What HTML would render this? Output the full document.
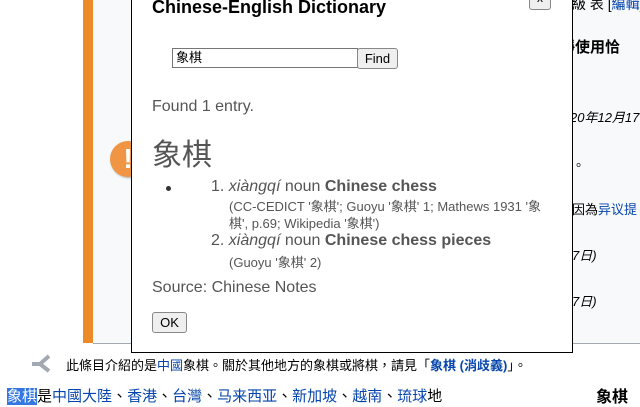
<!DOCTYPE html>
<html><head><meta charset="utf-8"><style>
body{margin:0;width:640px;height:400px;overflow:hidden;background:#fff;font-family:"Liberation Sans","Noto Sans CJK TC",sans-serif;position:relative}
.a{position:absolute;white-space:nowrap}
a{color:#0645ad;text-decoration:none}
.g{color:#555}
</style></head><body>
<div class="a" style="left:83px;top:0;width:10px;height:343px;background:#ec8a2a"></div>
<div class="a" style="left:93px;top:0;width:547px;height:343px;background:#f8f9fa;border-bottom:1px solid #a2a9b1"></div>
<div class="a" style="left:110px;top:141px;width:36px;height:36px;border-radius:50%;background:#ef9544;color:#fff;font-weight:bold;font-size:28px;line-height:36px;text-align:center;box-shadow:1px 1px 2px #aaa">!</div>
<div class="a" style="left:572px;top:-6px;font-size:14px">級 表 [<a>編輯</a>]</div>
<div class="a" style="left:560px;top:36px;font-size:15px;font-weight:bold">靜使用恰</div>
<div class="a" style="left:570px;top:107px;font-size:13px;font-style:italic">20年12月17</div>
<div class="a" style="left:572px;top:155px;font-size:13px">。</div>
<div class="a" style="left:572px;top:199px;font-size:13px">因為<a>异议提</a></div>
<div class="a" style="left:572px;top:245px;font-size:13px;font-style:italic">7日)</div>
<div class="a" style="left:572px;top:291px;font-size:13px;font-style:italic">7日)</div>

<div class="a" style="left:131px;top:-10px;width:440px;height:361px;background:#fff;border:1px solid #000">
 <div class="a" style="left:20px;top:6px;font-size:18px;font-weight:bold">Chinese-English Dictionary</div>
 <div class="a" style="left:397px;top:0;width:20px;height:17px;border:1px solid #888;border-radius:3px;background:#efefef;font-size:12px;text-align:center;line-height:12px">x</div>
 <div class="a" style="left:40px;top:57px;width:181px;height:18px;border:1px solid #767676;font-size:13px;line-height:18px;padding-left:3px">象棋</div>
 <div class="a" style="left:225px;top:57px;width:39px;height:19px;border:1px solid #888;border-radius:3px;background:#efefef;font-size:13px;text-align:center;line-height:19px">Find</div>
 <div class="a g" style="left:20px;top:107px;font-size:16px">Found 1 entry.</div>
 <div class="a g" style="left:20px;top:139px;font-size:30px">象棋</div>
 <div class="a" style="left:34px;top:195px;width:5px;height:5px;border-radius:50%;background:#333"></div>
 <div class="a g" style="left:79px;top:187px;font-size:16px">1. <i>xiàngqí</i> noun <b>Chinese chess</b></div>
 <div class="a g" style="left:97px;top:207px;font-size:13px;line-height:17px;white-space:normal;width:318px">(CC-CEDICT '象棋'; Guoyu '象棋' 1; Mathews 1931 '象棋', p.69; Wikipedia '象棋')</div>
 <div class="a g" style="left:79px;top:241px;font-size:16px">2. <i>xiàngqí</i> noun <b>Chinese chess pieces</b></div>
 <div class="a g" style="left:97px;top:261px;font-size:13px">(Guoyu '象棋' 2)</div>
 <div class="a g" style="left:20px;top:288px;font-size:16px">Source: Chinese Notes</div>
 <div class="a" style="left:20px;top:321px;width:33px;height:19px;border:1px solid #888;border-radius:3px;background:#efefef;font-size:13px;text-align:center;line-height:19px">OK</div>
</div>

<svg class="a" style="left:32px;top:354px" width="18" height="20" viewBox="0 0 18 20"><path d="M0 10H8M17 2L8 10L17 17" stroke="#a2a9b1" stroke-width="4" fill="none"/></svg>
<div class="a" style="left:66px;top:355px;font-size:13px">此條目介紹的是<a>中國</a>象棋。關於其他地方的象棋或將棋，請見「<a style="font-weight:bold">象棋 (消歧義)</a>」。</div>
<div class="a" style="left:7px;top:385px;font-size:15px"><span style="background:#3477e0;color:#fff">象棋</span>是<a>中國大陸</a>、<a>香港</a>、<a>台灣</a>、<a>马来西亚</a>、<a>新加坡</a>、<a>越南</a>、<a>琉球</a>地</div>
<div class="a" style="left:596px;top:383px;font-size:16px;font-weight:bold">象棋</div>
</body></html>
